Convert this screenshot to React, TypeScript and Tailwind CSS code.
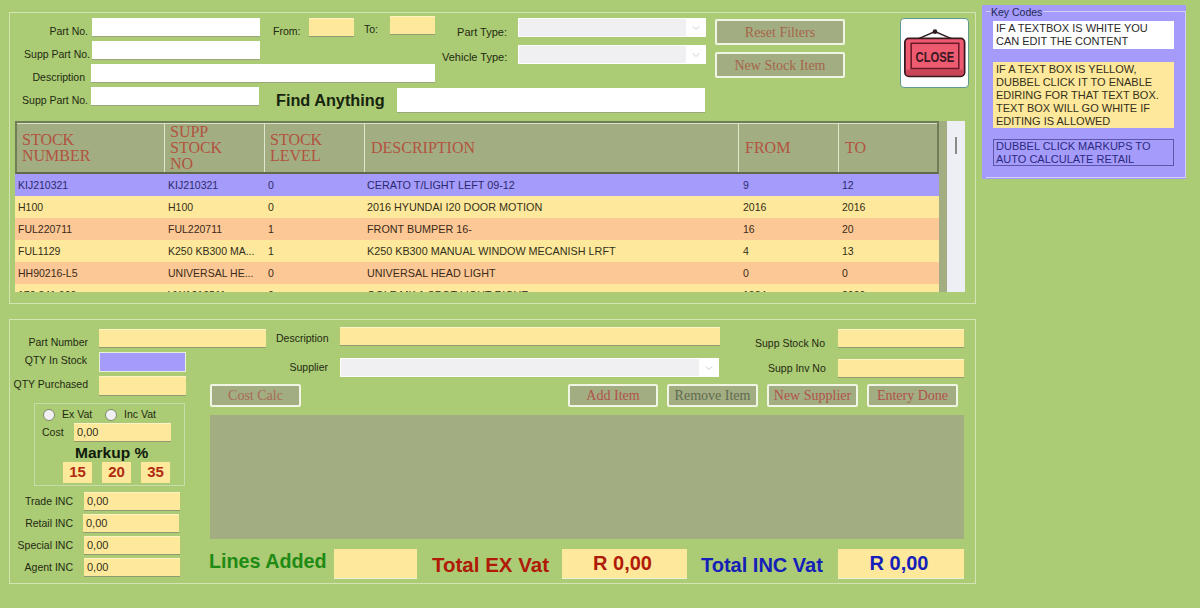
import { type ReactNode } from 'react';
import { ChevronDown } from 'lucide-react';

const rows = [
  { stock: 'KIJ210321', supp: 'KIJ210321', level: '0', desc: 'CERATO T/LIGHT LEFT 09-12', from: '9', to: '12', tone: 'bg-[#a59bfa] text-[#2a2a6e]' },
  { stock: 'H100', supp: 'H100', level: '0', desc: '2016 HYUNDAI I20 DOOR MOTION', from: '2016', to: '2016', tone: 'bg-[#fee89b] text-[#33301a]' },
  { stock: 'FUL220711', supp: 'FUL220711', level: '1', desc: 'FRONT BUMPER 16-', from: '16', to: '20', tone: 'bg-[#fcc896] text-[#3a2a18]' },
  { stock: 'FUL1129', supp: 'K250 KB300 MA...', level: '1', desc: 'K250 KB300 MANUAL WINDOW MECANISH LRFT', from: '4', to: '13', tone: 'bg-[#fee89b] text-[#33301a]' },
  { stock: 'HH90216-L5', supp: 'UNIVERSAL HE...', level: '0', desc: 'UNIVERSAL HEAD LIGHT', from: '0', to: '0', tone: 'bg-[#fcc896] text-[#3a2a18]' },
  { stock: '170 841 009', supp: 'VWA210511', level: '0', desc: 'GOLF MK 1 SPOT LIGHT RIGHT', from: '1984', to: '2000', tone: 'bg-[#fee89b] text-[#33301a]' },
];

const headers = [
  { label: 'STOCK NUMBER', w: 'w-[148px] pl-[5px]' },
  { label: 'SUPP STOCK NO', w: 'w-[100px] pl-[5px]' },
  { label: 'STOCK LEVEL', w: 'w-[100px] pl-[5px]' },
  { label: 'DESCRIPTION', w: 'w-[374px] pl-[6px]' },
  { label: 'FROM', w: 'w-[100px] pl-[6px]' },
  { label: 'TO', w: 'w-[98px] pl-[6px]' },
];

const cells = [
  'w-[150px] pl-[3px] text-[10.5px]',
  'w-[100px] pl-[3px] text-[10.5px]',
  'w-[100px] pl-[3px] text-[10.5px]',
  'w-[374px] pl-[2px] text-[10.8px]',
  'w-[100px] pl-[4px] text-[10.5px]',
  'w-[100px] pl-[3px] text-[10.5px]',
];

const whiteBox = 'bg-white border-b border-[#9aa67e] shrink-0';
const yellowBox = 'bg-[#fee89b] border-t border-t-[#fff3c4] border-b border-b-[#8f9a70] shrink-0';

function Label({ children, className = '' }: { children: ReactNode; className?: string }) {
  return <div className={`text-[10.5px] leading-[13px] text-[#1f2a12] whitespace-nowrap shrink-0 ${className}`}>{children}</div>;
}

function Combo({ className = '' }: { className?: string }) {
  return (
    <div className={`flex h-[19px] shrink-0 bg-white p-[1px] ${className}`}>
      <div className="flex-1 bg-[#f0f0f2]" />
      <div className="flex w-[19px] items-center justify-center">
        <ChevronDown size={12} strokeWidth={1} className="text-[#9a9a9a]" />
      </div>
    </div>
  );
}

function Btn({ children, className = '' }: { children: ReactNode; className?: string }) {
  return (
    <div className={`flex shrink-0 items-center justify-center rounded-[2px] border-2 border-[#f0f5e4] bg-[#a3ad82] font-['Liberation_Serif',serif] text-[14px] leading-none whitespace-nowrap ${className}`}>
      {children}
    </div>
  );
}

function Radio({ className = '' }: { className?: string }) {
  return <div className={`h-[12px] w-[12px] shrink-0 rounded-full border border-[#7d8a66] bg-[#f1f1f4] ${className}`} />;
}

function CloseSign() {
  return (
    <svg viewBox="0 0 69 70" className="h-full w-full">
      <path d="M14 22 L35 13 L56 22" fill="none" stroke="#2e1a20" strokeWidth="1.6" />
      <circle cx="35" cy="13" r="2.4" fill="#2e1a20" />
      <rect x="4" y="20" width="61.5" height="39" rx="4" fill="#ee5a70" stroke="#3a1820" strokeWidth="1.8" />
      <rect x="5" y="52" width="59.5" height="6" rx="3" fill="#c94558" />
      <rect x="10.5" y="25" width="49" height="26" fill="none" stroke="#6a1c2a" strokeWidth="1.6" />
      <text x="15" y="44" textLength="40" lengthAdjust="spacingAndGlyphs" fontSize="15" fontWeight="700" fontFamily="Liberation Sans, sans-serif" fill="#3a1820">
        CLOSE
      </text>
    </svg>
  );
}

function StockGrid() {
  return (
    <div className="ml-[5px] flex h-[171px] w-[950px] bg-[#a3ad82]">
      <div className="w-[924px] shrink-0 overflow-hidden">
        <div className="flex h-[53px] border-2 border-t-[#6f7d58] border-b-[#5f6a4c] border-x-[#6f7d58] bg-[#a3ad82] shadow-[inset_0_1px_0_#d8e4c2]">
          {headers.map((h) => (
            <div
              key={h.label}
              className={`${h.w} flex shrink-0 items-center border-r border-[#dfe8cc] font-['Liberation_Serif',serif] text-[16px] leading-[16px] text-[#b2533f] last:border-r-0`}
            >
              <span className="w-min">{h.label}</span>
            </div>
          ))}
        </div>
        {rows.map((r) => (
          <div key={r.stock} className={`flex h-[22px] items-center leading-[16px] ${r.tone}`}>
            {[r.stock, r.supp, r.level, r.desc, r.from, r.to].map((v, i) => (
              <div key={i} className={`${cells[i]} shrink-0 whitespace-nowrap`}>
                {v}
              </div>
            ))}
          </div>
        ))}
      </div>
      <div className="ml-[8px] h-full w-[18px] shrink-0 bg-[#eeeef5] pl-[8px] pt-[16px]">
        <div className="h-[17px] w-[2px] bg-[#8a8a8a]" />
      </div>
    </div>
  );
}

function FilterPanel() {
  return (
    <div className="h-[292px] border border-[#d2e4b2]">
      <div className="flex h-[74px]">
        <div className="w-[426px] shrink-0">
          <div className="mt-[5px] flex h-[19px]">
            <Label className="mt-[7px] w-[78px] text-right">Part No.</Label>
            <div className={`ml-[4px] h-[19px] w-[168px] ${whiteBox}`} />
            <Label className="ml-[13px] mt-[7px] w-[36px]">From:</Label>
            <div className={`h-[19px] w-[45px] ${yellowBox}`} />
            <Label className="ml-[10px] mt-[5px] w-[26px]">To:</Label>
            <div className={`-mt-[2px] h-[19px] w-[45px] ${yellowBox}`} />
          </div>
          <div className="mt-[4px] flex h-[19px]">
            <Label className="mt-[7px] w-[80px] text-right">Supp Part No.</Label>
            <div className={`ml-[2px] h-[19px] w-[168px] ${whiteBox}`} />
          </div>
          <div className="mt-[4px] flex h-[19px]">
            <Label className="mt-[7px] w-[75px] text-right">Description</Label>
            <div className={`ml-[6px] h-[19px] w-[344px] ${whiteBox}`} />
          </div>
        </div>
        <div className="ml-[6px] w-[264px] shrink-0">
          <div className="mt-[5px] flex items-start">
            <Label className="mt-[8px] w-[65px] text-right text-[11px]!">Part Type:</Label>
            <Combo className="ml-[11px] w-[188px]" />
          </div>
          <div className="mt-[6px] flex items-start">
            <Label className="mt-[6px] w-[65px] text-right text-[11px]!">Vehicle Type:</Label>
            <Combo className="ml-[11px] w-[188px]" />
          </div>
        </div>
        <div className="ml-[9px] flex w-[130px] shrink-0 flex-col gap-[7px] pt-[6px]">
          <Btn className="h-[26px] pt-[1px] text-[#a5654a]">Reset Filters</Btn>
          <Btn className="h-[26px] pt-[1px] text-[#a5654a]">New Stock Item</Btn>
        </div>
        <div className="ml-[55px] mt-[5px] h-[70px] w-[69px] shrink-0 rounded-[4px] border border-[#5f9a90] bg-white">
          <CloseSign />
        </div>
      </div>
      <div className="flex h-[34px] items-start">
        <Label className="mt-[7px] w-[78px] text-right">Supp Part No.</Label>
        <div className={`ml-[3px] h-[19px] w-[168px] ${whiteBox}`} />
        <div className="ml-[17px] mt-[3px] w-[109px] shrink-0 text-[16.25px] font-bold leading-[20px] whitespace-nowrap text-[#16240f]">Find Anything</div>
        <div className={`ml-[12px] mt-[1px] h-[25px] w-[308px] ${whiteBox}`} />
      </div>
      <StockGrid />
    </div>
  );
}

function PricingBox() {
  return (
    <div className="ml-[24px] mt-[7px] h-[83px] w-[151px] border border-[#c7dca6] pt-[4px]">
      <div className="flex h-[13px] items-center pl-[8px]">
        <Radio />
        <Label className="ml-[7px] w-[43px]">Ex Vat</Label>
        <Radio />
        <Label className="ml-[7px]">Inc Vat</Label>
      </div>
      <div className="mt-[2px] flex h-[19px] items-center pl-[7px]">
        <Label className="w-[32px]">Cost</Label>
        <div className={`flex h-[19px] w-[97px] items-center pl-[3px] text-[11px] text-[#33301a] ${yellowBox}`}>0,00</div>
      </div>
      <div className="mt-[2px] pl-[40px] text-[15.5px] font-bold leading-[18px] text-[#101a0c]">Markup %</div>
      <div className="flex gap-[10px] pl-[28px]">
        {['15', '20', '35'].map((m) => (
          <div key={m} className="flex h-[21px] w-[29px] items-center justify-center bg-[#fee89b] text-[15px] font-bold text-[#b02a10]">
            {m}
          </div>
        ))}
      </div>
    </div>
  );
}

function PriceRow({ label, shift }: { label: string; shift: string }) {
  return (
    <div className="flex h-[19px] items-center">
      <Label className="w-[63px] text-right">{label}</Label>
      <div className={`${shift} flex h-[19px] w-[96px] items-center pl-[3px] text-[11px] text-[#33301a] ${yellowBox}`}>0,00</div>
    </div>
  );
}

function EntryPanel() {
  return (
    <div className="mt-[15px] h-[265px] border border-[#d2e4b2]">
      <div className="flex h-[32px] items-start">
        <Label className="mt-[16px] w-[78px] text-right">Part Number</Label>
        <div className={`ml-[11px] mt-[9px] h-[19px] w-[167px] ${yellowBox}`} />
        <Label className="ml-[10px] mt-[12px] w-[52px]">Description</Label>
        <div className={`ml-[12px] mt-[7px] h-[19px] w-[380px] ${yellowBox}`} />
        <Label className="ml-[35px] mt-[17px] w-[72px]">Supp Stock No</Label>
        <div className={`ml-[11px] mt-[9px] h-[19px] w-[126px] ${yellowBox}`} />
      </div>
      <div className="flex">
        <div className="w-[200px] shrink-0">
          <div className="flex h-[20px] items-center">
            <Label className="mb-[4px] w-[77px] text-right">QTY In Stock</Label>
            <div className="ml-[12px] h-[20px] w-[87px] border border-[#e8f0d8] bg-[#a59bfa]" />
          </div>
          <div className="mt-[4px] flex h-[20px] items-center">
            <Label className="mb-[4px] w-[78px] text-right">QTY Purchased</Label>
            <div className={`ml-[11px] h-[20px] w-[87px] ${yellowBox}`} />
          </div>
          <PricingBox />
          <div className="mt-[6px] flex flex-col gap-[3px]">
            <PriceRow label="Trade INC" shift="ml-[11px]" />
            <PriceRow label="Retail INC" shift="ml-[10px]" />
            <PriceRow label="Special INC" shift="ml-[11px]" />
            <PriceRow label="Agent INC" shift="ml-[11px]" />
          </div>
        </div>
        <div className="w-[754px] shrink-0">
          <div className="mt-[6px] flex h-[20px] items-start">
            <Label className="mt-[3px] w-[118px] text-right">Supplier</Label>
            <Combo className="ml-[12px] w-[379px]" />
            <Label className="ml-[49px] mt-[4px] w-[59px]">Supp Inv No</Label>
            <div className={`ml-[11px] mt-[1px] h-[19px] w-[126px] ${yellowBox}`} />
          </div>
          <div className="mt-[6px] flex">
            <Btn className="h-[23px] w-[91px] text-[13px] text-[#a86a58]">Cost Calc</Btn>
            <div className="ml-[267px] flex gap-[9px]">
              <Btn className="h-[23px] w-[90px] text-[#b0524a]">Add Item</Btn>
              <Btn className="h-[23px] w-[91px] text-[#5e6b50]">Remove Item</Btn>
              <Btn className="h-[23px] w-[91px] text-[#b0524a]">New Supplier</Btn>
              <Btn className="h-[23px] w-[91px] text-[#b0524a]">Entery Done</Btn>
            </div>
          </div>
          <div className="mt-[8px] h-[124px] w-[754px] bg-[#a3ad82]" />
          <div className="mt-[10px] flex h-[30px] items-center">
            <div className="-ml-[1px] mb-[4px] w-[125px] shrink-0 text-[19.7px] font-bold leading-none whitespace-nowrap text-[#1f8a14]">Lines Added</div>
            <div className="h-[30px] w-[83px] shrink-0 border-b border-[#e8f0d8] bg-[#fee89b]" />
            <div className="ml-[15px] mt-[2px] w-[130px] shrink-0 text-[20.5px] font-bold leading-none whitespace-nowrap text-[#b01a08]">Total EX Vat</div>
            <div className="flex h-[30px] w-[125px] shrink-0 items-center justify-center border-b border-[#e8f0d8] bg-[#fee89b] pb-[1px] pr-[4px] text-[20px] font-bold text-[#b01a08]">R 0,00</div>
            <div className="ml-[14px] mt-[2px] w-[137px] shrink-0 text-[20px] font-bold leading-none whitespace-nowrap text-[#1420b8]">Total INC Vat</div>
            <div className="flex h-[30px] w-[126px] shrink-0 items-center justify-center border-b border-[#e8f0d8] bg-[#fee89b] pb-[1px] pr-[4px] text-[20px] font-bold text-[#1420b8]">R 0,00</div>
          </div>
        </div>
      </div>
    </div>
  );
}

function KeyCodes() {
  return (
    <div className="ml-[6px] mt-[5px] h-[174px] w-[204px] shrink-0 bg-[#a59bfa] pl-[4px] pt-[6px]">
      <div className="h-[167px] w-[200px] border-r border-b border-t border-[#d5d0fb] pl-[7px] pr-[11px] pt-[9px] text-[11px] leading-[13px]">
        <div className="-ml-[2px] -mt-[15px] w-fit bg-[#a59bfa] pr-[1px] text-[10.5px] text-[#222a55]">Key Codes</div>
        <div className="mt-[2px] h-[28px] bg-white pl-[3px] pt-[1px] text-[#2a2a2a]">
          IF A TEXTBOX IS WHITE YOU
          <br />
          CAN EDIT THE CONTENT
        </div>
        <div className="mt-[13px] h-[66px] bg-[#fee89b] pl-[3px] pt-[1px] text-[#33301a]">
          IF A TEXT BOX IS YELLOW,
          <br />
          DUBBEL CLICK IT TO ENABLE
          <br />
          EDIRING FOR THAT TEXT BOX.
          <br />
          TEXT BOX WILL GO WHITE IF
          <br />
          EDITING IS ALLOWED
        </div>
        <div className="mt-[11px] h-[27px] border border-[#5d55a8] pl-[2px] text-[#2b2a80]">
          DUBBEL CLICK MARKUPS TO
          <br />
          AUTO CALCULATE RETAIL
        </div>
      </div>
    </div>
  );
}

export default function App() {
  return (
    <div className="flex h-[608px] w-[1200px] overflow-hidden bg-[#abcb74] pl-[9px] font-['Liberation_Sans',sans-serif]">
      <div className="w-[967px] shrink-0 pt-[12px]">
        <FilterPanel />
        <EntryPanel />
      </div>
      <KeyCodes />
    </div>
  );
}
